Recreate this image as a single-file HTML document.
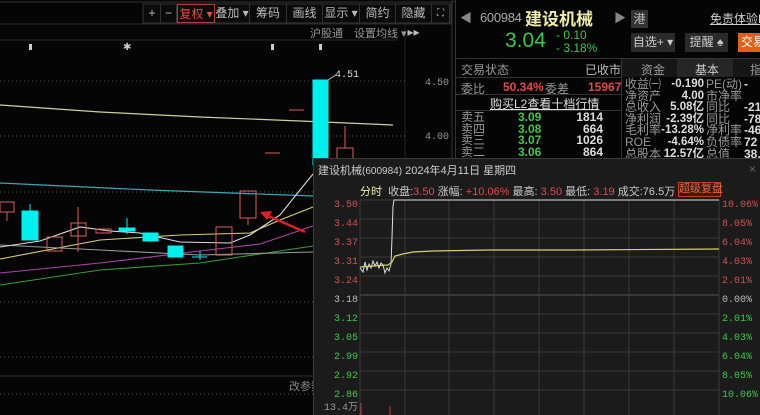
<!DOCTYPE html>
<html><head><meta charset="utf-8"><style>
*{margin:0;padding:0;box-sizing:border-box}
body{width:760px;height:415px;background:#050505;overflow:hidden;position:relative;font-family:"Liberation Sans","Noto Sans CJK SC",sans-serif;font-size:12px;color:#bbb}
.a{position:absolute;white-space:nowrap}
.tb{position:absolute;top:4px;height:19px;border-right:1px solid #333;color:#bbb;font-size:12px;line-height:19px;text-align:center}
.g{color:#3fc84a}.r{color:#e04a4a}.w{color:#ddd}
</style></head><body>
<svg class="a" style="left:0;top:0" width="460" height="415">
<line x1="0" y1="2" x2="455" y2="2" stroke="#333"/>
<rect x="143" y="4" width="308" height="19" fill="#0a0a0a" stroke="#333"/>
<line x1="0" y1="24" x2="452" y2="24" stroke="#2a2a2a"/>
<line x1="0" y1="40" x2="398" y2="40" stroke="#2a2a2a"/>
<line x1="405" y1="24" x2="405" y2="415" stroke="#222"/>
<line x1="452" y1="0" x2="452" y2="415" stroke="#333"/>
<g stroke="#555" stroke-dasharray="1,3">
<line x1="0" y1="81" x2="405" y2="81"/><line x1="0" y1="136" x2="405" y2="136"/>
<line x1="0" y1="192" x2="313" y2="192"/><line x1="0" y1="302" x2="313" y2="302"/>
<line x1="0" y1="357" x2="313" y2="357"/><line x1="0" y1="394" x2="313" y2="394"/></g>
<line x1="0" y1="376" x2="313" y2="376" stroke="#333"/>
<g fill="#ccc"><rect x="29" y="44" width="3" height="6"/><rect x="271" y="44" width="3" height="6"/><rect x="319" y="44" width="3" height="6"/></g>
<text x="123" y="50" fill="#ccc" font-size="10">✱</text>
<polyline points="0,105 100,112 200,117 300,121 393,125" fill="none" stroke="#cfcf9a" stroke-width="1.2"/>
<polyline points="0,183 150,190 313,196" fill="none" stroke="#3aa8b8" stroke-width="1.2"/>
<g fill="none" stroke-width="1.1">
<polyline points="0,285 100,270 200,263 313,246" stroke="#3a9a3a"/>
<polyline points="0,273 100,263 200,251 260,244 313,226" stroke="#b040b0"/>
<polyline points="0,259 100,240 180,235 250,233 280,220 313,207 345,195" stroke="#d8d070"/>
<polyline points="0,245 100,250 200,255 313,252" stroke="#999"/>
<polyline points="0,247 40,241 80,227 110,231 140,233 180,242 230,243 250,235 280,215 300,190 313,174 330,160" stroke="#ddd"/>
</g>
<g stroke="#d9605a" fill="none">
<rect x="0" y="202" width="14" height="10"/><line x1="7" y1="212" x2="7" y2="221"/>
<rect x="47" y="237" width="15" height="14"/>
<rect x="71" y="223" width="15" height="13"/><line x1="78" y1="207" x2="78" y2="252"/>
<rect x="96" y="229" width="15" height="4"/>
<rect x="216" y="227" width="16" height="28"/>
<rect x="240" y="191" width="16" height="27"/><line x1="248" y1="218" x2="248" y2="225"/>
<line x1="265" y1="153" x2="280" y2="153"/><line x1="289" y1="110" x2="304" y2="110"/>
<rect x="337" y="148" width="16" height="14"/><line x1="345" y1="126" x2="345" y2="148"/>
</g>
<g fill="#00f0f0" stroke="#00f0f0">
<rect x="22" y="211" width="16" height="29"/><line x1="30" y1="204" x2="30" y2="211"/>
<rect x="119" y="228" width="16" height="3"/><line x1="127" y1="218" x2="127" y2="234"/>
<rect x="143" y="233" width="15" height="8"/>
<rect x="168" y="246" width="15" height="11"/>
<line x1="192" y1="257" x2="207" y2="257"/><line x1="200" y1="251" x2="200" y2="260"/>
<rect x="313" y="80" width="15" height="85"/>
</g>
<polyline points="328,80 336,75" stroke="#ccc" fill="none"/>
<line x1="305" y1="232" x2="266" y2="215" stroke="#e02020" stroke-width="2.5"/>
<polygon points="260,212 272,211 267,220" fill="#e02020"/>
<text x="335" y="77" fill="#ddd" font-size="10" font-family="Liberation Mono">4.51</text>
<text x="425" y="85" fill="#999" font-size="10" font-family="Liberation Mono">4.50</text>
<text x="425" y="139" fill="#999" font-size="10" font-family="Liberation Mono">4.00</text>
</svg>
<div class="tb" style="left:144px;width:17px">+</div>
<div class="tb" style="left:161px;width:16px">−</div>
<div class="tb" style="left:177px;width:38px;border:1px solid #b04030;color:#e05040">复权 ▾</div>
<div class="tb" style="left:215px;width:35px">叠加 ▾</div>
<div class="tb" style="left:250px;width:37px">筹码</div>
<div class="tb" style="left:287px;width:36px">画线</div>
<div class="tb" style="left:323px;width:37px">显示 ▾</div>
<div class="tb" style="left:360px;width:36px">简约</div>
<div class="tb" style="left:396px;width:36px">隐藏 ▸▸</div>
<div class="tb" style="left:432px;width:18px;font-size:10px">⛶</div>
<div class="a" style="left:310px;top:25px;font-size:11px;color:#999">沪股通</div>
<div class="a" style="left:354px;top:25px;font-size:11px;color:#999">设置均线 ▾</div>
<div class="a" style="left:289px;top:378px;font-size:11px;color:#888">改参数</div>

<div class="a" style="left:455px;top:0;width:305px;height:415px;background:#050505;border-left:1px solid #333"></div>
<div class="a" style="left:460px;top:9px;color:#888;font-size:12px">◀</div>
<div class="a" style="left:480px;top:10px;color:#aaa;font-size:13px;letter-spacing:-0.3px">600984</div>
<div class="a" style="left:525px;top:5px;color:#eeeeaa;font-size:17px;font-weight:bold">建设机械</div>
<div class="a" style="left:614px;top:9px;color:#888">▶</div>
<div class="a" style="left:631px;top:10px;width:17px;height:18px;background:#333;color:#bbb;text-align:center;line-height:18px">港</div>
<div class="a" style="left:710px;top:10px;color:#ccc;text-decoration:underline;font-size:12px">免责体验L2</div>
<div class="a g" style="left:505px;top:29px;font-size:21px">3.04</div>
<div class="a g" style="left:556px;top:28px;font-size:12px">- 0.10</div>
<div class="a g" style="left:556px;top:41px;font-size:12px">- 3.18%</div>
<div class="a" style="left:631px;top:33px;width:44px;height:19px;background:#2a2a2a;color:#ccc;line-height:19px;text-align:center">自选+ ▾</div>
<div class="a" style="left:685px;top:33px;width:43px;height:19px;background:#2a2a2a;color:#ccc;line-height:19px;text-align:center">提醒 ♠</div>
<div class="a" style="left:738px;top:33px;width:22px;height:19px;background:#e0601a;color:#fff;line-height:19px;padding-left:3px;overflow:hidden">交易</div>
<div class="a" style="left:456px;top:58px;width:304px;border-top:1px solid #333"></div>
<div class="a" style="left:621px;top:58px;height:102px;border-left:1px solid #333"></div>
<div class="a" style="left:622px;top:59px;width:138px;height:18px;background:#161616"></div>
<div class="a" style="left:677px;top:59px;width:56px;height:18px;background:#262626"></div>
<div class="a" style="left:641px;top:61px;color:#999">资金</div>
<div class="a" style="left:695px;top:61px;color:#ccc">基本</div>
<div class="a" style="left:750px;top:61px;color:#999">指</div>
<div class="a" style="left:461px;top:61px;color:#999">交易状态</div>
<div class="a" style="left:585px;top:61px;color:#bbb">已收市</div>
<div class="a" style="left:456px;top:77px;width:165px;border-top:1px solid #333"></div>
<div class="a" style="left:461px;top:80px;color:#999">委比</div>
<div class="a r" style="left:503px;top:80px;font-weight:bold">50.34%</div>
<div class="a" style="left:545px;top:80px;color:#999">委差</div>
<div class="a r" style="left:588px;top:80px;font-weight:bold">15967</div>
<div class="a" style="left:456px;top:94px;width:165px;border-top:1px solid #333"></div>
<div class="a" style="left:490px;top:95px;color:#ddd;text-decoration:underline">购买L2查看十档行情</div>
<div class="a" style="left:456px;top:110px;width:165px;border-top:1px solid #333"></div>
<div class="a" style="left:461px;top:112px;line-height:11.6px;color:#999">卖五<br>卖四<br>卖三<br>卖二</div>
<div class="a g" style="left:518px;top:112px;line-height:11.6px;font-weight:bold">3.09<br>3.08<br>3.07<br>3.06</div>
<div class="a w" style="left:565px;top:112px;line-height:11.6px;text-align:right;width:38px;font-weight:bold">1814<br>664<br>1026<br>864</div>
<div class="a" style="left:625px;top:79px;line-height:11.6px;color:#999;font-size:12px">收益㈠<br>净资产<br>总收入<br>净利润<br>毛利率<br>ROE<br>总股本</div>
<div class="a w" style="left:640px;top:79px;line-height:11.6px;width:64px;text-align:right;font-size:11.5px;font-weight:bold">-0.190<br>4.00<br>5.08亿<br>-2.39亿<br>-13.28%<br>-4.64%<br>12.57亿</div>
<div class="a" style="left:706px;top:79px;line-height:11.6px;color:#999;font-size:12px">PE(动)<br>市净率<br>同比<br>同比<br>净利率<br>负债率<br>总值</div>
<div class="a w" style="left:744px;top:79px;line-height:11.6px;font-size:12px;font-weight:bold">-<br>&nbsp;<br>-21<br>-78<br>-46<br>72<br>38.</div>

<div class="a" style="left:313px;top:158px;width:447px;height:257px;background:#1b1b1b;border-left:1px solid #3a3a3a;border-top:1px solid #3a3a3a"></div>
<div class="a" style="left:318px;top:162px;color:#ccc;font-size:11px">建设机械<span style="font-size:10px">(600984)</span> 2024年4月11日 星期四</div>
<div class="a" style="left:749px;top:162px;color:#666">×</div>
<div class="a" style="left:360px;top:183px;font-size:11px;color:#ccc"><span style="color:#eeeeaa">分时</span> &nbsp;收盘:<span class="r">3.50</span> 涨幅: <span class="r">+10.06%</span> 最高: <span class="r">3.50</span> 最低: <span class="r">3.19</span> 成交:76.5万</div>
<div class="a" style="left:678px;top:182px;width:43px;height:15px;border:1px solid #c04020;background:#3a1a10;color:#e06a40;font-size:11px;line-height:13px;text-align:center">超级复盘</div>
<svg class="a" style="left:313px;top:158px" width="447" height="257">
<g stroke="#3a3a3a">
<line x1="47" y1="42" x2="406" y2="42"/><line x1="47" y1="61" x2="406" y2="61"/><line x1="47" y1="80" x2="406" y2="80"/><line x1="47" y1="99" x2="406" y2="99"/><line x1="47" y1="118" x2="406" y2="118"/><line x1="47" y1="137" x2="406" y2="137" stroke="#555"/><line x1="47" y1="156" x2="406" y2="156"/><line x1="47" y1="175" x2="406" y2="175"/><line x1="47" y1="194" x2="406" y2="194"/><line x1="47" y1="213" x2="406" y2="213"/><line x1="47" y1="232" x2="406" y2="232"/>
<line x1="47" y1="42" x2="47" y2="257"/><line x1="92" y1="42" x2="92" y2="257"/><line x1="136" y1="42" x2="136" y2="257"/><line x1="181" y1="42" x2="181" y2="257"/><line x1="226" y1="42" x2="226" y2="257"/><line x1="271" y1="42" x2="271" y2="257"/><line x1="316" y1="42" x2="316" y2="257"/><line x1="361" y1="42" x2="361" y2="257"/><line x1="406" y1="42" x2="406" y2="257"/>
</g>
<polyline points="47,110 50,114 52,104 54,112 56,106 58,110 60,103 62,108 64,104 66,110 68,105 70,107 72,115 74,110 76,113 78,106 79,80 80,48 81,42 406,42" fill="none" stroke="#ddd"/>
<polyline points="47,109 60,108 75,107 79,104 82,98 90,96 100,94 120,93 175,92 260,92 406,91" fill="none" stroke="#d8d070" stroke-width="1.2"/>
<line x1="48" y1="245" x2="48" y2="257" stroke="#c04040"/><line x1="77" y1="248" x2="77" y2="257" stroke="#c04040"/>
<g font-family="Liberation Mono" font-size="10" text-anchor="end">
<text x="45" y="49" fill="#d05050">3.50</text><text x="45" y="68" fill="#d05050">3.44</text><text x="45" y="87" fill="#d05050">3.37</text><text x="45" y="106" fill="#d05050">3.31</text><text x="45" y="125" fill="#d05050">3.24</text><text x="45" y="144" fill="#bbb">3.18</text><text x="45" y="163" fill="#3fc84a">3.12</text><text x="45" y="182" fill="#3fc84a">3.05</text><text x="45" y="201" fill="#3fc84a">2.99</text><text x="45" y="220" fill="#3fc84a">2.92</text><text x="45" y="239" fill="#3fc84a">2.86</text>
<text x="45" y="252" fill="#999" font-family="Liberation Mono,Noto Sans CJK SC">13.4万</text>
</g>
<g font-family="Liberation Mono" font-size="10">
<text x="409" y="49" fill="#d05050">10.06%</text><text x="409" y="68" fill="#d05050">8.05%</text><text x="409" y="87" fill="#d05050">6.04%</text><text x="409" y="106" fill="#d05050">4.03%</text><text x="409" y="125" fill="#d05050">2.01%</text><text x="409" y="144" fill="#bbb">0.00%</text><text x="409" y="163" fill="#3fc84a">2.01%</text><text x="409" y="182" fill="#3fc84a">4.03%</text><text x="409" y="201" fill="#3fc84a">6.04%</text><text x="409" y="220" fill="#3fc84a">8.05%</text><text x="409" y="239" fill="#3fc84a">10.06%</text>
</g>
</svg>
</body></html>
